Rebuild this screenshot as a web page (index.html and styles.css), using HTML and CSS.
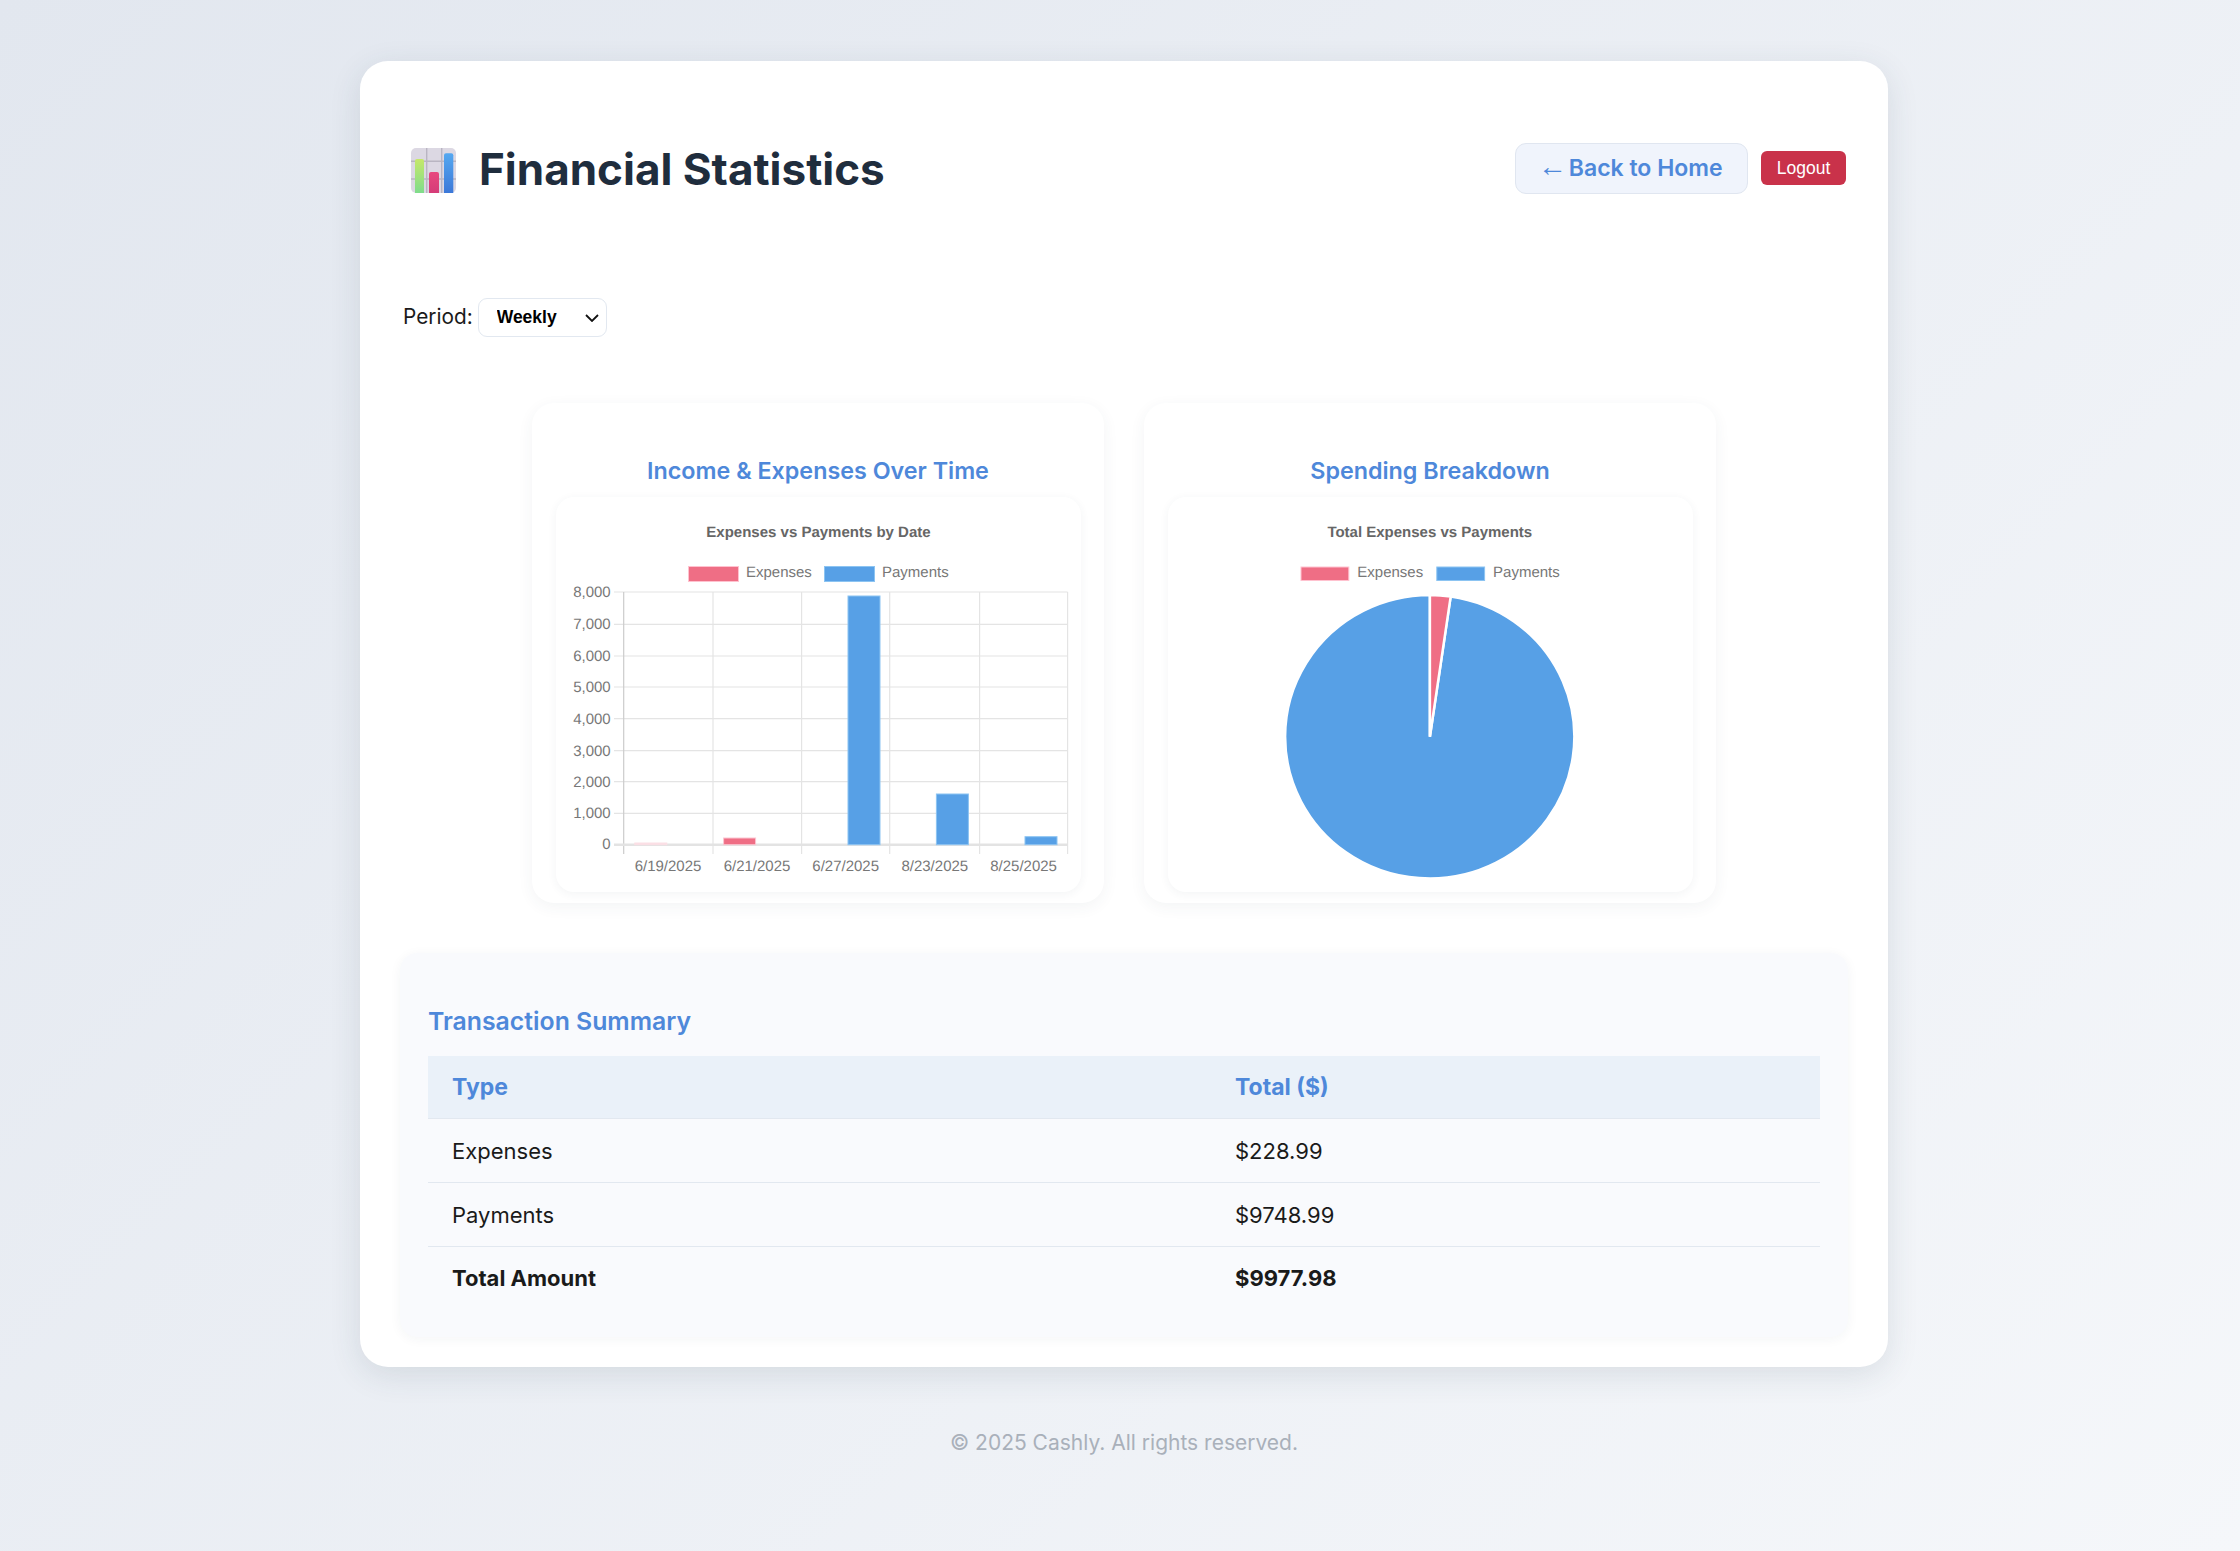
FILE: index.html
```html
<!DOCTYPE html>
<html lang="en">

<head>
	<meta charset="UTF-8">
	<meta name="viewport" content="width=device-width, initial-scale=1.0">
	<title>Financial Statistics</title>
	<link rel="stylesheet" href="styles.css">
</head>

<body>

	<main class="container">
		<header class="page__header">
			<h1 class="page__title">
				<svg class="title__icon" viewBox="0 0 45 45">
					<defs>
						<linearGradient id="bar__green" x1="0" y1="0" x2="0" y2="1">
							<stop offset="0" stop-color="#c6e86a" />
							<stop offset="1" stop-color="#7fdc8c" />
						</linearGradient>
						<linearGradient id="bar__pink" x1="0" y1="0" x2="0" y2="1">
							<stop offset="0" stop-color="#e8487f" />
							<stop offset="1" stop-color="#d53c78" />
						</linearGradient>
						<linearGradient id="bar__blue" x1="0" y1="0" x2="0" y2="1">
							<stop offset="0" stop-color="#55a8f0" />
							<stop offset="1" stop-color="#3c78d8" />
						</linearGradient>
					</defs>
					<rect width="45" height="45" rx="5" fill="#dcd8e3" />
					<path d="M15.7 0V45M30.7 0V45M0 13.3H45M0 31H45" stroke="#b9b5c2" stroke-width="1.4" />
					<path d="M4 45V13a2 2 0 0 1 2-2H11a2 2 0 0 1 2 2V45Z" fill="url(#bar__green)" />
					<path d="M18 45V26a2 2 0 0 1 2-2H26a2 2 0 0 1 2 2V45Z" fill="url(#bar__pink)" />
					<path d="M33 45V7.300a2 2 0 0 1 2-2H40.300a2 2 0 0 1 2 2V45Z" fill="url(#bar__blue)" />
				</svg>
				<span class="title__text">Financial Statistics</span>
			</h1>
			<div class="page__actions">
				<a class="btn__back" href="#"><span class="btn__arrow">←</span> Back to Home</a>
				<button class="btn__logout">Logout</button>
			</div>
		</header>

		<div class="period">
			<label for="period__select">Period:</label>
			<select id="period__select">
				<option>Weekly</option>
				<option>Monthly</option>
				<option>Yearly</option>
			</select>
		</div>

		<section class="charts">
			<article class="chart__card">
				<h3 class="chart__heading">Income &amp; Expenses Over Time</h3>
				<div class="chart__box">
					<svg class="chart" viewBox="0 0 525 395">
						<text class="chart__title" x="262.500" y="40">Expenses vs Payments by Date</text>

						<rect class="swatch swatch--pink" x="132.500" y="69.500" width="50" height="15" />
						<text class="chart__text" x="190" y="80">Expenses</text>
						<rect class="swatch swatch--blue" x="268.500" y="69.500" width="50" height="15" />
						<text class="chart__text" x="326" y="80">Payments</text>

						<path class="grid" d="M157 95V357M245.600 95V357M333.700 95V357M423.600 95V357M511.600 95V357" />
						<path class="grid" d="M58 95H511.600M58 127.300H511.600M58 159H511.600M58 190H511.600M58 221.700H511.600M58 253.700H511.600M58 284.700H511.600M58 316.300H511.600" />
						<path class="grid__axis" d="M67.700 95V357" />
						<path class="grid__zero" d="M58 347.700H511.600" />

						<rect class="bar bar--faint" x="78.800" y="346" width="32" height="1.700" />
						<rect class="bar bar--pink" x="167.600" y="341" width="32" height="6.700" />
						<rect class="bar bar--blue" x="292" y="99" width="32" height="248.700" />
						<rect class="bar bar--blue" x="380.400" y="297" width="32" height="50.700" />
						<rect class="bar bar--blue" x="469" y="339.700" width="32" height="8" />

						<g class="chart__text axis__y">
							<text x="54.700" y="100">8,000</text>
							<text x="54.700" y="132.300">7,000</text>
							<text x="54.700" y="164">6,000</text>
							<text x="54.700" y="195">5,000</text>
							<text x="54.700" y="226.700">4,000</text>
							<text x="54.700" y="258.700">3,000</text>
							<text x="54.700" y="289.700">2,000</text>
							<text x="54.700" y="321.300">1,000</text>
							<text x="54.700" y="352">0</text>
						</g>
						<g class="chart__text axis__x">
							<text x="112" y="374">6/19/2025</text>
							<text x="201" y="374">6/21/2025</text>
							<text x="289.700" y="374">6/27/2025</text>
							<text x="378.800" y="374">8/23/2025</text>
							<text x="467.600" y="374">8/25/2025</text>
						</g>
					</svg>
				</div>
			</article>

			<article class="chart__card">
				<h3 class="chart__heading">Spending Breakdown</h3>
				<div class="chart__box">
					<svg class="chart" viewBox="0 0 525 395">
						<text class="chart__title" x="261.800" y="40">Total Expenses vs Payments</text>

						<rect class="swatch swatch--pink" x="133" y="70" width="47.800" height="13.500" />
						<text class="chart__text" x="189.300" y="80">Expenses</text>
						<rect class="swatch swatch--blue" x="268.800" y="70" width="47.800" height="13.500" />
						<text class="chart__text" x="325.100" y="80">Payments</text>

						<path class="slice slice--blue" d="M261.900 239.700L282.700 99.400A144.600 141.800 0 1 1 261.900 97.900Z" />
						<path class="slice slice--pink" d="M261.900 239.700L261.900 97.900A144.600 141.800 0 0 1 282.700 99.400Z" />
					</svg>
				</div>
			</article>
		</section>

		<section class="summary">
			<h3 class="summary__title">Transaction Summary</h3>
			<table class="summary__table">
				<thead>
					<tr>
						<th class="col__type">Type</th>
						<th>Total ($)</th>
					</tr>
				</thead>
				<tbody>
					<tr>
						<td>Expenses</td>
						<td>$228.99</td>
					</tr>
					<tr>
						<td>Payments</td>
						<td>$9748.99</td>
					</tr>
					<tr class="row__total">
						<td>Total Amount</td>
						<td>$9977.98</td>
					</tr>
				</tbody>
			</table>
		</section>
	</main>

	<footer class="page__footer">© 2025 Cashly. All rights reserved.</footer>

</body>

</html>
```

FILE: styles.css
```css
* {
	box-sizing: border-box;
}

html {
	height: 100%;
}

body {
	margin: 0;
	padding: 61px 0 0 8px;
	min-height: 100%;
	font-family: Inter, "Liberation Sans", sans-serif;
	color: #1a1a1a;
	background: linear-gradient(135deg, #e2e7ef 0%, #f5f7fa 100%);
}

.container {
	width: 1528px;
	height: 1306px;
	margin: 0 auto;
	padding: 82px 40px 0;
	background: #fff;
	border-radius: 28px;
	box-shadow: 0 8px 32px rgba(44, 62, 80, 0.12);
}

.page__header {
	display: flex;
	justify-content: space-between;
	align-items: center;
	height: 50px;
	padding: 0 2px 0 11px;
}

.page__title {
	display: flex;
	align-items: center;
	gap: 23px;
	margin: 0;
	font-size: 44px;
	font-weight: 700;
	color: #1f2d3d;
}

.title__icon {
	width: 45px;
	height: 45px;
	margin-top: 5px;
}

.title__text {
	padding-top: 2px;
}

.page__actions {
	display: flex;
	align-items: center;
	gap: 13px;
}

.btn__back {
	display: block;
	width: 233px;
	height: 51px;
	padding: 0 0 0 22px;
	font-size: 23px;
	font-weight: 600;
	line-height: 49px;
	color: #4e88da;
	text-decoration: none;
	white-space: nowrap;
	background: #f0f4fc;
	border: 1px solid #e0e6f0;
	border-radius: 11px;
}

.btn__arrow {
	margin-right: -4px;
	font-family: "Liberation Sans", sans-serif;
	font-size: 29px;
	font-weight: 400;
	line-height: 0;
}

.btn__logout {
	width: 85px;
	height: 34px;
	padding: 0;
	font-family: "Liberation Sans", sans-serif;
	font-size: 17.500px;
	color: #fff;
	background: #c9324a;
	border: 0;
	border-radius: 6px;
}

.period {
	display: flex;
	align-items: center;
	gap: 5px;
	height: 39px;
	margin-top: 105px;
	padding-left: 3px;
	font-size: 20.800px;
}

.period label {
	margin-top: -2px;
}

.period select {
	width: 129px;
	height: 39px;
	padding: 0 0 2px 18px;
	font-family: "Liberation Sans", sans-serif;
	font-size: 17.500px;
	font-weight: 700;
	color: #000;
	appearance: none;
	background: #fff url("data:image/svg+xml,%3Csvg xmlns='http://www.w3.org/2000/svg' width='14' height='8'%3E%3Cpath d='M1 1l6 6 6-6' fill='none' stroke='%23111' stroke-width='1.800'/%3E%3C/svg%3E") no-repeat right 7px center;
	border: 1px solid #e2e8f0;
	border-radius: 9px;
}

.charts {
	display: flex;
	justify-content: center;
	gap: 40px;
	margin-top: 66px;
}

.chart__card {
	width: 572px;
	height: 500px;
	padding: 0 23.500px;
	background: #fff;
	border-radius: 22px;
	box-shadow: 0 4px 16px rgba(44, 62, 80, 0.06);
}

.chart__heading {
	height: 94px;
	margin: 0;
	padding-top: 54px;
	font-size: 23.300px;
	font-weight: 600;
	line-height: 28px;
	text-align: center;
	color: #4e88da;
}

.chart__box {
	height: 395px;
	background: #fff;
	border-radius: 18px;
	box-shadow: 0 2px 10px rgba(44, 62, 80, 0.06);
}

.chart {
	display: block;
	width: 100%;
	height: 100%;
}

.chart__title {
	font-family: "Liberation Sans", sans-serif;
	font-size: 15px;
	font-weight: 700;
	text-anchor: middle;
	text-rendering: geometricPrecision;
	fill: #666;
}

.chart__text {
	font-family: "Liberation Sans", sans-serif;
	font-size: 15px;
	text-rendering: geometricPrecision;
	fill: #777;
}

.axis__y {
	text-anchor: end;
}

.axis__x {
	text-anchor: middle;
}

.swatch {
	stroke-width: 1;
}

.swatch--pink {
	fill: #ef6e85;
	stroke: #ffc2cf;
}

.swatch--blue {
	fill: #57a0e6;
	stroke: #8cc4f2;
}

.grid {
	fill: none;
	stroke: #e4e4e4;
	stroke-width: 1.200;
}

.grid__axis {
	fill: none;
	stroke: #cbcbcb;
	stroke-width: 1.200;
}

.grid__zero {
	fill: none;
	stroke: #e3e3e3;
	stroke-width: 2.500;
}

.bar {
	stroke-width: 1;
}

.bar--faint {
	fill: #fbdfe5;
	stroke: #fbdfe5;
}

.bar--pink {
	fill: #ef6e85;
	stroke: #fbc6d1;
}

.bar--blue {
	fill: #57a0e6;
	stroke: #8cc4f2;
}

.slice {
	stroke: #fff;
	stroke-width: 2.500;
}

.slice--pink {
	fill: #ef6e85;
}

.slice--blue {
	fill: #57a0e6;
}

.summary {
	height: 384px;
	margin-top: 50px;
	padding: 50px 28px 0;
	background: #f9fafd;
	border-radius: 18px;
	box-shadow: 0 2px 12px rgba(44, 62, 80, 0.05);
}

.summary__title {
	height: 53px;
	margin: 0;
	font-size: 24.800px;
	font-weight: 600;
	line-height: 37px;
	color: #4e88da;
}

.summary__table {
	width: 100%;
	border-collapse: collapse;
	font-size: 22px;
}

.summary__table th,
.summary__table td {
	height: 64px;
	padding: 2px 24px 0;
	text-align: left;
	border-bottom: 1px solid #e2e8f0;
}

.summary__table th {
	height: 62px;
	padding-top: 0;
	font-size: 23px;
	font-weight: 700;
	color: #4e88da;
	background: #eaf1f9;
}

.col__type {
	width: 783px;
}

.row__total td {
	padding-top: 0;
	font-weight: 700;
	border-bottom: 0;
}

.page__footer {
	margin-top: 63px;
	padding-bottom: 78px;
	font-size: 21px;
	text-align: center;
	color: #a9b0ba;
}
```
